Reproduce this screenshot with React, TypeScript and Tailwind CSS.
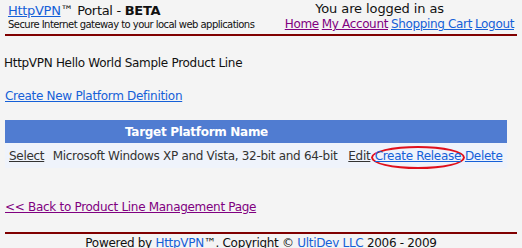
import React from "react";

export default function App() {
  const link = "text-[#1560d8] underline";
  const visited = "text-[#800080] underline";
  return (
    <div className="w-[522px] h-[248px] overflow-hidden bg-[#f4f4f4] text-[#111] font-['DejaVu_Sans',sans-serif]">
      {/* Header */}
      <div className="flex justify-between h-[34px] whitespace-nowrap">
        <div className="pl-[8px] pt-[3px] shrink-0">
          <div className="text-[13px] leading-[15px] tracking-[-0.3px]">
            <a className={link}>HttpVPN</a>™ Portal - <b>BETA</b>
          </div>
          <div className="text-[10px] leading-[12px] mt-[1px] tracking-[-0.55px]">
            Secure Internet gateway to your local web applications
          </div>
        </div>
        <div className="flex flex-col items-end pr-[8px] pt-[1px] text-[13px] leading-[15px] shrink-0">
          <div className="pr-[70px] tracking-[-0.1px]">You are logged in as</div>
          <div className="flex gap-[3px] mt-[1px] text-[12px] tracking-[-0.35px]">
            <a className={visited}>Home</a>
            <a className={visited}>My Account</a>
            <a className={link}>Shopping Cart</a>
            <a className={link}>Logout</a>
          </div>
        </div>
      </div>
      <div className="mx-[5px] h-[2px] bg-[#800000]" />

      {/* Body */}
      <div className="pl-[4px] text-[12px] leading-[14px] tracking-[-0.3px]">
        <div className="mt-[20px]">HttpVPN Hello World Sample Product Line</div>
        <div className="mt-[19px] pl-[1px]">
          <a className={link}>Create New Platform Definition</a>
        </div>
        <table className="mt-[17px] ml-[1px] w-[502px] border-collapse text-[#333333]">
          <thead>
            <tr className="bg-[#507cd1] h-[23px]">
              <th className="p-0"></th>
              <th className="p-0 text-white font-bold text-center">Target Platform Name</th>
              <th className="p-0"></th>
              <th className="p-0"></th>
              <th className="p-0"></th>
            </tr>
          </thead>
          <tbody>
            <tr className="bg-[#eff3fb] h-[25px]">
              <td className="px-[4px] py-0">
                <a className="underline text-[#333333]">Select</a>
              </td>
              <td className="px-[4px] py-0 whitespace-nowrap">Microsoft Windows XP and Vista, 32-bit and 64-bit</td>
              <td className="px-[4px] py-0">
                <a className="underline text-[#333333]">Edit</a>
              </td>
              <td className="px-[0px] py-0 relative whitespace-nowrap">
                <span className="absolute left-[-4px] right-[-3px] top-[3px] bottom-[-1px] border-2 border-[#e0101c] rounded-[50%]" />
                <a className={link + " relative"}>Create Release</a>
              </td>
              <td className="pl-[3px] pr-[4px] py-0">
                <a className={link}>Delete</a>
              </td>
            </tr>
          </tbody>
        </table>
        <div className="mt-[32px] pl-[1px]">
          <a className={visited}>&lt;&lt; Back to Product Line Management Page</a>
        </div>
      </div>

      <div className="mx-[5px] mt-[18px] h-[2px] bg-[#800000]" />
      <div className="text-center text-[12px] leading-[14px] mt-[2px] tracking-[-0.3px] whitespace-nowrap">
        Powered by <a className={link}>HttpVPN</a>™. Copyright © <a className={link}>UltiDev LLC</a> 2006 - 2009
      </div>
    </div>
  );
}
